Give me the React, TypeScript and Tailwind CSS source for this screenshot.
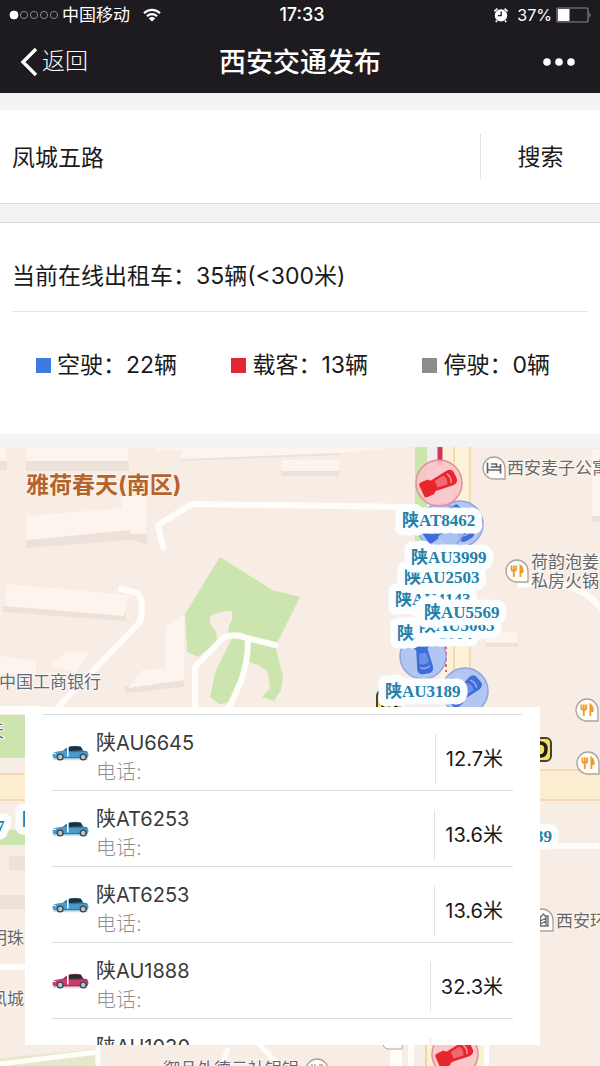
import React, { useState } from 'react';

interface Taxi {
    id: number;
    plate: string;
    distance: string;
    occupied: boolean;
}

const taxis: Taxi[] = [
    { id: 1, plate: '陕AU6645', distance: '12.7米', occupied: false },
    { id: 2, plate: '陕AT6253', distance: '13.6米', occupied: false },
    { id: 3, plate: '陕AT6253', distance: '13.6米', occupied: false },
    { id: 4, plate: '陕AU1888', distance: '32.3米', occupied: true },
    { id: 5, plate: '陕AU1030', distance: '32.8米', occupied: false },
];

const stats = [
    { label: '空驶', count: 22, color: 'bg-[#3d7be0]' },
    { label: '载客', count: 13, color: 'bg-[#e02834]' },
    { label: '停驶', count: 0, color: 'bg-[#8c8c8c]' },
];

// Later entries are drawn over earlier ones
const plates = [
    { text: '陕AU1664', x: 397, y: 639 },
    { text: '陕AU5065', x: 419, y: 631 },
    { text: '陕AU4143', x: 395, y: 605 },
    { text: '陕AU5569', x: 424, y: 618 },
    { text: '陕AU2503', x: 404, y: 583 },
    { text: '陕AU3999', x: 411, y: 563 },
    { text: '陕AT8462', x: 402, y: 526 },
    { text: '陕AU3189', x: 385, y: 697 },
    { text: '39', x: 535, y: 842 },
    { text: '7', x: -4, y: 832 },
    { text: '陕', x: 22, y: 825 },
];

const StatusBar: React.FC = () => (
    <div className="grid h-[30px] grid-cols-3 items-center px-2 text-[17px] leading-none">
        <div className="flex items-center gap-1 whitespace-nowrap">
            <svg width="50" height="12" viewBox="0 0 50 12" fill="none" stroke="#8b898d" aria-hidden="true">
                <circle cx="6" cy="6" r="4" fill="#fff" stroke="#fff" />
                <circle cx="16" cy="6" r="3.6" />
                <circle cx="26" cy="6" r="3.6" />
                <circle cx="36" cy="6" r="3.6" />
                <circle cx="46" cy="6" r="3.6" />
            </svg>
            <span>中国移动</span>
            <svg className="ml-2" width="20" height="14" viewBox="0 0 20 14" fill="none" stroke="#fff" strokeWidth="2.2" aria-hidden="true">
                <path d="M2 5.2 A11.5 11.5 0 0 1 18 5.2" />
                <path d="M5 8.2 A7.2 7.2 0 0 1 15 8.2" />
                <path d="M10 13.6 L6.8 10.4 A4.6 4.6 0 0 1 13.2 10.4 Z" fill="#fff" stroke="none" />
            </svg>
        </div>
        <span className="pl-1 text-center text-[18px] font-medium">17:33</span>
        <div className="flex items-center justify-end gap-2 whitespace-nowrap">
            <svg width="16" height="16" viewBox="0 0 16 16" aria-hidden="true">
                <circle cx="8" cy="8.4" r="6.2" fill="#fff" />
                <path d="M1.4 4.4 L4.4 1.6 M14.6 4.4 L11.6 1.6 M4 13.4 L2.8 15 M12 13.4 L13.2 15" stroke="#fff" strokeWidth="1.6" />
                <path d="M8.2 4.6 V8.6 H5" stroke="#1c1a1e" strokeWidth="1.3" fill="none" />
            </svg>
            <div className="flex items-center gap-1">
                <span className="text-base leading-none">37%</span>
                <svg width="36" height="16" viewBox="0 0 36 16" aria-hidden="true">
                    <rect x="1" y="1" width="31" height="14" rx="1" fill="none" stroke="#8b898d" strokeWidth="1.2" />
                    <rect x="2" y="2" width="11.5" height="12" fill="#fff" />
                    <path d="M33.5 5.4 Q35.4 8 33.5 10.6 Z" fill="#b5b3b7" />
                </svg>
            </div>
        </div>
    </div>
);

const NavBar: React.FC = () => (
    <div className="grid h-[63px] grid-cols-3 items-center px-5">
        <a href="#back" className="flex items-center gap-1 text-[23px] font-light">
            <svg width="18" height="30" viewBox="0 0 18 30" fill="none" stroke="#fff" strokeWidth="3.4" aria-hidden="true">
                <path d="M16 2 L3 15 L16 28" />
            </svg>
            返回
        </a>
        <h1 className="pt-1 text-center text-[27px] font-medium whitespace-nowrap">西安交通发布</h1>
        <button type="button" aria-label="更多" className="mr-1 justify-self-end">
            <svg width="34" height="10" viewBox="0 0 34 10" fill="#fff">
                <circle cx="5" cy="5" r="3.8" />
                <circle cx="17" cy="5" r="3.8" />
                <circle cx="29" cy="5" r="3.8" />
            </svg>
        </button>
    </div>
);

const CarIcon: React.FC<{ occupied: boolean }> = ({ occupied }) => {
    const body = occupied ? '#c93d6c' : '#4a9bcb';
    const dark = occupied ? '#9b2c50' : '#2f76a6';
    return (
        <svg className="shrink-0" width="37" height="16" viewBox="0 0 37 16" aria-hidden="true">
            <path d="M1 14.6 H36" stroke="#d5dce2" strokeWidth="1.2" />
            <path d="M.6 10.4 Q.6 7.6 4 6.8 L11 5.6 Q14.600 2 18 1.200 Q24 .2 29 1.400 L31.400 5.600 L35 6.400 Q36.600 7.200 36.400 11 Q36 13.400 34 13.600 H3 Q.6 13.400 .6 10.400 Z" fill={body} />
            <path d="M16.400 2.200 Q22 .6 28.600 1.800 L30.800 5.600 L16.600 6 Z" fill="#242c38" />
            <path d="M11.800 5.800 Q13.600 3.400 15.400 2.600 V6 Z" fill={dark} />
            <path d="M12 12.600 H28 M16.400 6.600 H35" stroke={dark} strokeWidth="1" />
            <path d="M15.800 2 V11.400" stroke="#fff" strokeWidth="1.600" />
            <path d="M1.200 8.600 H4" stroke="#e9f2f6" strokeWidth="1" />
            <circle cx="8.200" cy="12" r="3.600" fill="#3a4652" />
            <circle cx="8.200" cy="12" r="2.200" fill="#bcc6cd" />
            <circle cx="31.200" cy="12" r="3.600" fill="#3a4652" />
            <circle cx="31.200" cy="12" r="2.200" fill="#bcc6cd" />
        </svg>
    );
};

const CarMarker: React.FC<{ x: number; y: number; angle: number; occupied?: boolean }> = ({ x, y, angle, occupied }) => (
    <g transform={`translate(${x} ${y})`}>
        <circle
            r="23"
            fill={occupied ? '#f9c3c8' : '#a9c0f3'}
            fillOpacity=".88"
            stroke={occupied ? '#df8f9d' : '#8ea5e0'}
            strokeWidth="1.5"
        />
        <g transform={`rotate(${angle})`} fill={occupied ? '#e9252d' : '#3f6ddb'}>
            <path d="M-19 -6 Q-19 -8 -15 -8 L-9 -8 Q-7 -5 -4 -6 L12 -8 Q18 -8 18 -3 V3 Q18 8 12 8 L-4 6 Q-7 5 -9 8 L-15 8 Q-19 8 -19 6 Z" />
            <path d="M-3 -3.500 L7 -5 Q10 0 7 5 L-3 3.500 Z" fill={occupied ? '#f06a70' : '#6d90e6'} />
            <path d="M11 -5 Q14 0 11 5" fill="none" stroke={occupied ? '#f9a9ad' : '#9db5f0'} strokeWidth="1.4" />
        </g>
    </g>
);

const FoodPin: React.FC<{ x: number; y: number }> = ({ x, y }) => (
    <g transform={`translate(${x} ${y})`}>
        <path d="M0 -11 A11 11 0 1 0 0 11 H11 V0 A11 11 0 0 0 0 -11 Z" fill="#fffdf8" stroke="#aaa49c" strokeWidth="1.3" />
        <g stroke="#eb9c2d" fill="none" strokeWidth="1.8">
            <path d="M-5.6 -5.4 V-2 Q-5.6 0 -3.2 0 Q-.8 0 -.8 -2 V-5.4 M-3.2 -5.4 V6" />
            <path d="M3.4 6 V-5.4 Q6.4 -3 5.6 1 H3.4" fill="#eb9c2d" />
        </g>
    </g>
);

const MapCanvas: React.FC = () => (
    <svg
        className="absolute inset-0 h-full w-full"
        viewBox="0 447 600 619"
        preserveAspectRatio="xMidYMin slice"
        role="img"
        aria-label="附近出租车地图"
    >
        <rect x="0" y="447" width="600" height="619" fill="#f8ede4" />

        {/* Buildings */}
        <g fill="#ece2d9">
            <path d="M0 461 H7 V470 H0 Z M26 461 H129 V471 H26 Z M181 458 L340 452 V455 L182 461 Z M281 470 H339 V476 H281 Z" />
            <path d="M26 540 L130 530 L147 534 V544 L130 540 L26 548 Z" />
            <path d="M3 606 L126 614 V621 L3 612 Z" />
            <path d="M124 686 L184 680 V687 L126 693 Z" />
            <path d="M486 642 H518 V647 H486 Z M592 516 H600 V522 H592 Z" />
        </g>
        <g fill="#fdf4ed">
            <path d="M0 447 H6 V461 H0 Z M26 447 H128 V461 H26 Z M156 447 H400 L340 453 L181 459 V450 H156 Z M282 460 H339 V471 H282 Z" />
            <path d="M26 516 L122 508 V496 H146 V534 H130 V530 L26 540 Z" />
            <path d="M6 584 L129 595 L124 616 L6 606 Z" />
            <path d="M0 655 L36 662 V674 H0 Z M50 665 L66 652 L90 653 L76 672 Z" />
            <path d="M166 625 L184 614 V680 L128 688 L142 670 L166 668 Z" />
            <path d="M486 632 H517 V643 H486 Z M592 449 H600 V516 H592 Z" />
        </g>

        {/* Park */}
        <g fill="#cce5af">
            <path d="M220 557 L272 590 L300 597 L277 643 L235 634 L216 643 L198 657 L187 652 L185 614 Z" />
            <path d="M232 638 L275 645 L283 676 L281 690 L274 701 L262 697 L270 688 L268 672 L260 666 L245 660 L240 690 Q231 705 219 704 L210 697 L216 670 Z" />
        </g>
        <path d="M232 611 Q222 611 212 615 Q206 622 216 631 L217 640 L229 637 Q227 627 232 620 Z" fill="#f8ede4" />
        <g fill="none" stroke="#fffdf9" strokeLinejoin="round" strokeLinecap="round">
            <path d="M195 712 V667 L222 639 Q233 632 247 638 L275 645" strokeWidth="6" />
            <path d="M248 640 Q248 667 238 688 L228 710" strokeWidth="6" />
            <path d="M163 547 L158 525 L192 504 L410 507" strokeWidth="6" />
            <path d="M121 589 L137 593 Q145 600 140 622 L58 707" strokeWidth="6" />
            <path d="M520 585 Q582 575 606 616" strokeWidth="6" />
            <path d="M0 710 H40" strokeWidth="8" />
            <path d="M535 846 H600" strokeWidth="6" />
            <path d="M0 967 H30" strokeWidth="6" />
        </g>

        {/* North-south road */}
        <path d="M415 447 H427 V546 H415 Z" fill="#cce5af" />
        <path d="M427 447 H470 V707 H427 Z" fill="#fdf2d8" />
        <path d="M427 447 H440 V707 H427 Z" fill="#f3eaf2" />
        <path d="M454 447 V707 M470 447 V707" stroke="#f4dcb2" strokeWidth="2" />
        <path d="M440 447 V465" stroke="#c93a56" strokeWidth="5" />
        <path d="M446 640 V672" stroke="#da6477" strokeWidth="2" strokeDasharray="3 3" />

        {/* East-west road */}
        <path d="M0 715 H40 V758 H0 Z M0 830 H40 V845 H0 Z" fill="#cce5af" />
        <path d="M0 774 H40 V800 H0 Z M530 770 H600 V800 H530 Z" fill="#fcecd0" />
        <path d="M0 774 H40 M0 800 H40 M530 770 H600 M530 800 H600" stroke="#f2d3a6" strokeWidth="1.5" />
        <path d="M9 856 H25 V870 H9 Z M0 895 H25 V909 H0 Z" fill="#ece2d9" />

        {/* Bottom streets */}
        <path d="M0 1058 L98 1049 V1066 H0 Z" fill="#e5e9cc" />
        <path d="M0 1064 L98 1052 M98 1040 V1066 M255 1040 L280 1066 M228 1048 L222 1066" stroke="#fffdf9" strokeWidth="5" />
        <path d="M390 1040 H402 V1066 H390 Z M408 1040 H414 V1066 H408 Z M484 1040 H489 V1066 H484 Z" fill="#fffdf9" />
        <path d="M425 1040 H484 V1066 H425 Z" fill="#fdf2d0" />
        <path d="M426 1040 V1066" stroke="#f1d49f" strokeWidth="2" />
        <path d="M383 1044 Q384 1049 389 1049 H402 V1044" fill="#fffdf9" stroke="#aaa49c" />

        <CarMarker x={460} y={524} angle={60} />
        <CarMarker x={441} y={527} angle={-35} />
        <CarMarker x={439} y={483} angle={-25} occupied />
        <CarMarker x={423} y={656} angle={80} />
        <CarMarker x={465} y={691} angle={-40} />
        <CarMarker x={455} y={1054} angle={-25} occupied />

        {/* Metro entrances */}
        <path d="M377 707 V697 Q377 690 384 690 H400 V707" fill="#f5df68" stroke="#4a412b" strokeWidth="2" />
        <path d="M382 707 L386 703 L390 707 M394 707 L399 704" stroke="#1f1b12" strokeWidth="3" fill="none" />
        <rect x="520" y="738" width="31" height="23" rx="5" fill="#f3df6b" stroke="#4a412b" strokeWidth="2" />
        <path d="M534 743 H540 Q546 743 546 749 Q546 756 540 756 H534" fill="none" stroke="#1f1b12" strokeWidth="3.4" />

        <FoodPin x={517} y={571} />
        <FoodPin x={587} y={710} />
        <FoodPin x={588} y={763} />
        <g transform="translate(317 1070)">
            <circle r="11" fill="#fffdf8" stroke="#aaa49c" strokeWidth="1.3" />
            <path d="M-5 -6 V0 M-2 -6 V0 M3 -6 V0 M5 -6 V0" stroke="#b3a16c" strokeWidth="1.4" />
        </g>

        {/* Hotel and building pins */}
        <g transform="translate(494 468)">
            <path d="M0 -11 A11 11 0 1 0 0 11 H11 V0 A11 11 0 0 0 0 -11 Z" fill="#fffdf8" stroke="#aaa49c" strokeWidth="1.3" />
            <path d="M-6.500 -5.500 V5.500 M6.500 -4 V5.500 M-6.500 2 H6.500 M-3.400 -1 H6.500 M-3 -4 H2.500 V-1" stroke="#5d656d" strokeWidth="1.7" fill="none" />
        </g>
        <g transform="translate(542 920)">
            <path d="M0 -11 A11 11 0 1 0 0 11 H11 V0 A11 11 0 0 0 0 -11 Z" fill="#fffdf8" stroke="#aaa49c" strokeWidth="1.3" />
            <path d="M-5 6 H6 V-4 H4 M-1.500 6 V-3 L1.500 -6 L4 -3 V6 M-1.500 1 L4 -2 M-1.500 4 L4 1" stroke="#6d6d70" strokeWidth="1.4" fill="none" />
        </g>

        {/* Place names */}
        <g fontSize="17" fill="#68686c" stroke="#fdf8f2" strokeWidth="2" className="[paint-order:stroke]">
            <text x="507" y="474">西安麦子公寓</text>
            <text x="531" y="568">荷韵泡姜</text>
            <text x="531" y="587">私房火锅</text>
            <text x="-1" y="688" fill="#5f6a7b">中国工商银行</text>
            <text x="-13" y="737">天</text>
            <text x="-10" y="944">明珠</text>
            <text x="-10" y="1005">凤城</text>
            <text x="556" y="927">西安环</text>
            <text x="163" y="1075" fill="#5f6a7b">御品外德云社锅锅</text>
        </g>
        <text x="26" y="493" fontSize="23" fontWeight="700" fill="#b4632d" stroke="#fdf4ed" strokeWidth="2" className="[paint-order:stroke]">
            雅荷春天(南区)
        </text>

        <g
            fontSize="17"
            fontWeight="700"
            fill="#2580a8"
            stroke="#fbfeff"
            strokeWidth="15"
            strokeLinejoin="round"
            className="font-['Liberation_Serif','Noto_Sans_CJK_SC',serif] [paint-order:stroke]"
        >
            {plates.map((plate) => (
                <text key={plate.text} x={plate.x} y={plate.y}>
                    {plate.text}
                </text>
            ))}
        </g>
    </svg>
);

const TaxiRow: React.FC<{ taxi: Taxi }> = ({ taxi }) => (
    <li className="flex h-[76px] shrink-0 items-center border-b border-[#dcdcdc]">
        <CarIcon occupied={taxi.occupied} />
        <div className="ml-[7px] flex-1 pt-[10px] text-[20px] leading-[29px]">
            <p className="text-[#3a3a3a]">{taxi.plate}</p>
            <p className="font-light text-[#8f8f8f]">电话:</p>
        </div>
        <div className="mt-3 flex h-[50px] items-center border-l border-[#e2e2e4] px-[10px] text-[20px] text-[#1a1a1a]">
            {taxi.distance}
        </div>
    </li>
);

export default function App() {
    const [keyword, setKeyword] = useState('凤城五路');

    return (
        <div className="flex h-screen flex-col bg-[#f3f2f5] font-['Inter','Noto_Sans_CJK_SC',sans-serif] text-[#1a1a1a]">
            <header className="shrink-0 bg-[#1d1a20] text-white">
                <StatusBar />
                <NavBar />
            </header>

            <form
                className="mt-[17px] flex shrink-0 items-center border-b border-[#dcdbde] bg-white py-6 pl-3 text-[23px]"
                onSubmit={(e) => e.preventDefault()}
            >
                <input
                    type="text"
                    aria-label="搜索地点"
                    value={keyword}
                    onChange={(e) => setKeyword(e.target.value)}
                    className="h-[45px] min-w-0 flex-1 bg-transparent pb-[2px] outline-none"
                />
                <button type="submit" className="h-[45px] w-[120px] border-l border-[#e2e2e4] pt-[2px]">
                    搜索
                </button>
            </form>

            <section className="mt-[18px] shrink-0 border-t border-[#dcdbde] bg-white px-3 text-[23px]">
                <h2 className="border-b border-[#e4e4e6] pt-9 pb-[18px] leading-[34px]">当前在线出租车：35辆(&lt;300米)</h2>
                <ul className="flex justify-between pt-9 pr-[38px] pb-[52px] pl-6 leading-[34px]">
                    {stats.map((stat) => (
                        <li key={stat.label} className="flex items-center gap-[6px] whitespace-nowrap">
                            <span className={`h-[15px] w-[15px] ${stat.color}`} />
                            <span>
                                {stat.label}：{stat.count}辆
                            </span>
                        </li>
                    ))}
                </ul>
            </section>

            <main className="relative mt-[13px] flex min-h-0 flex-1 flex-col overflow-hidden">
                <MapCanvas />
                {/* Nearby taxi list over the map */}
                <section className="relative mt-[260px] mr-[60px] mb-[21px] ml-[25px] min-h-0 flex-1 overflow-hidden bg-white pt-[7px]">
                    <div className="mx-[18px] border-t border-[#dcdcdc]" />
                    <ul className="flex flex-col px-[27px]">
                        {taxis.map((taxi) => (
                            <TaxiRow key={taxi.id} taxi={taxi} />
                        ))}
                    </ul>
                </section>
            </main>
        </div>
    );
}
